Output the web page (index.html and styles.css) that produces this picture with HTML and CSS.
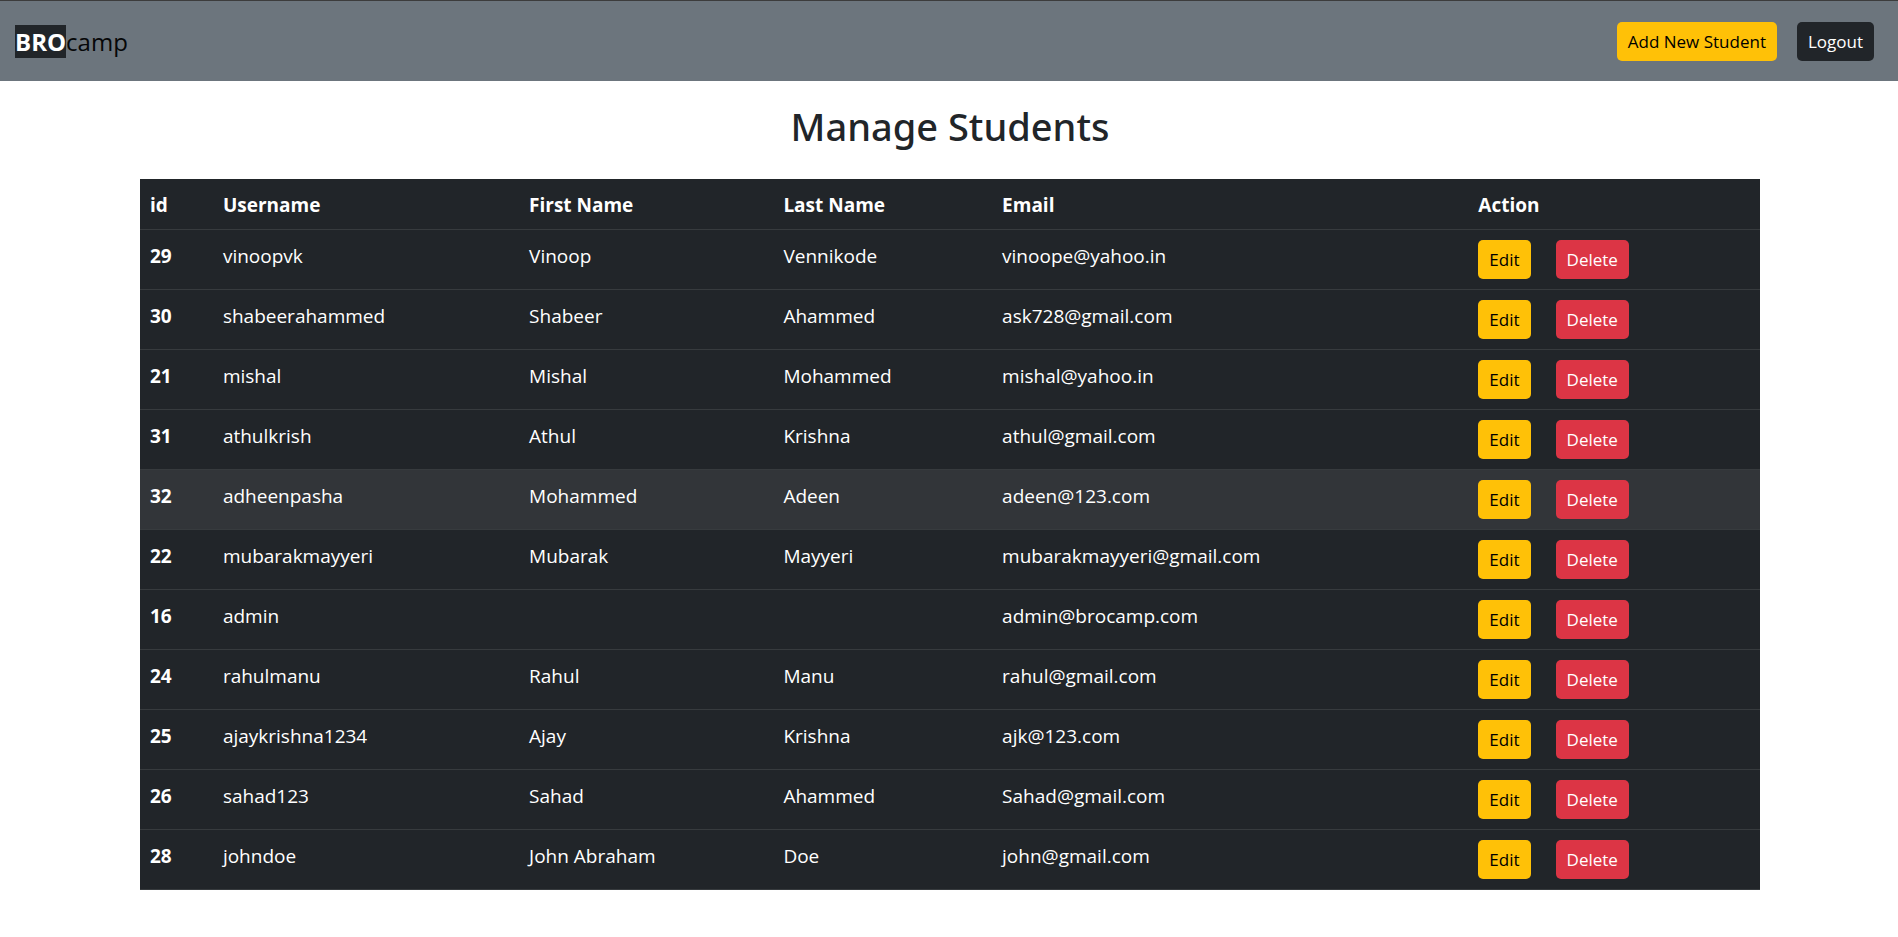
FILE: index.html
```html
<!DOCTYPE html>
<html lang="en">
<head>
<meta charset="utf-8">
<title>Manage Students</title>
<link rel="stylesheet" href="styles.css">
</head>
<body>
<nav class="navbar">
  <a class="brand" href="#"><span class="brand-mark">BRO</span>camp</a>
  <div class="nav-actions">
    <button class="btn btn-warning" type="button">Add New Student</button>
    <button class="btn btn-dark" type="button">Logout</button>
  </div>
</nav>
<main class="container">
  <h1 class="title">Manage Students</h1>
  <table class="table">
    <colgroup><col class="col-id"><col class="col-user"><col class="col-first"><col class="col-last"><col class="col-email"><col class="col-action"></colgroup>
    <thead>
      <tr><th scope="col">id</th><th scope="col">Username</th><th scope="col">First Name</th><th scope="col">Last Name</th><th scope="col">Email</th><th scope="col">Action</th></tr>
    </thead>
    <tbody>
      <tr><th scope="row">29</th><td>vinoopvk</td><td>Vinoop</td><td>Vennikode</td><td>vinoope@yahoo.in</td><td class="action-cell"><div class="actions"><button class="btn btn-warning" type="button">Edit</button><button class="btn btn-danger" type="button">Delete</button></div></td></tr>
      <tr><th scope="row">30</th><td>shabeerahammed</td><td>Shabeer</td><td>Ahammed</td><td>ask728@gmail.com</td><td class="action-cell"><div class="actions"><button class="btn btn-warning" type="button">Edit</button><button class="btn btn-danger" type="button">Delete</button></div></td></tr>
      <tr><th scope="row">21</th><td>mishal</td><td>Mishal</td><td>Mohammed</td><td>mishal@yahoo.in</td><td class="action-cell"><div class="actions"><button class="btn btn-warning" type="button">Edit</button><button class="btn btn-danger" type="button">Delete</button></div></td></tr>
      <tr><th scope="row">31</th><td>athulkrish</td><td>Athul</td><td>Krishna</td><td>athul@gmail.com</td><td class="action-cell"><div class="actions"><button class="btn btn-warning" type="button">Edit</button><button class="btn btn-danger" type="button">Delete</button></div></td></tr>
      <tr class="active"><th scope="row">32</th><td>adheenpasha</td><td>Mohammed</td><td>Adeen</td><td>adeen@123.com</td><td class="action-cell"><div class="actions"><button class="btn btn-warning" type="button">Edit</button><button class="btn btn-danger" type="button">Delete</button></div></td></tr>
      <tr><th scope="row">22</th><td>mubarakmayyeri</td><td>Mubarak</td><td>Mayyeri</td><td>mubarakmayyeri@gmail.com</td><td class="action-cell"><div class="actions"><button class="btn btn-warning" type="button">Edit</button><button class="btn btn-danger" type="button">Delete</button></div></td></tr>
      <tr><th scope="row">16</th><td>admin</td><td></td><td></td><td>admin@brocamp.com</td><td class="action-cell"><div class="actions"><button class="btn btn-warning" type="button">Edit</button><button class="btn btn-danger" type="button">Delete</button></div></td></tr>
      <tr><th scope="row">24</th><td>rahulmanu</td><td>Rahul</td><td>Manu</td><td>rahul@gmail.com</td><td class="action-cell"><div class="actions"><button class="btn btn-warning" type="button">Edit</button><button class="btn btn-danger" type="button">Delete</button></div></td></tr>
      <tr><th scope="row">25</th><td>ajaykrishna1234</td><td>Ajay</td><td>Krishna</td><td>ajk@123.com</td><td class="action-cell"><div class="actions"><button class="btn btn-warning" type="button">Edit</button><button class="btn btn-danger" type="button">Delete</button></div></td></tr>
      <tr><th scope="row">26</th><td>sahad123</td><td>Sahad</td><td>Ahammed</td><td>Sahad@gmail.com</td><td class="action-cell"><div class="actions"><button class="btn btn-warning" type="button">Edit</button><button class="btn btn-danger" type="button">Delete</button></div></td></tr>
      <tr><th scope="row">28</th><td>johndoe</td><td>John Abraham</td><td>Doe</td><td>john@gmail.com</td><td class="action-cell"><div class="actions"><button class="btn btn-warning" type="button">Edit</button><button class="btn btn-danger" type="button">Delete</button></div></td></tr>
    </tbody>
  </table>
</main>
</body>
</html>
```

FILE: styles.css
```css
* { box-sizing: border-box; }
body {
  margin: 0;
  background: #fff;
  color: #212529;
  font-family: "Segoe UI", "Open Sans", "Noto Sans", sans-serif;
  font-size: 19px;
  line-height: 30px;
}
.navbar {
  display: flex;
  align-items: center;
  justify-content: space-between;
  padding: 21px 24px 20px 15px;
  border-top: 1px solid #3c3c3c;
  background: #6c757d;
}
.brand {
  color: #060708;
  font-size: 24px;
  line-height: 33px;
  text-decoration: none;
}
.brand-mark {
  display: inline-block;
  background: #212529;
  color: #fff;
  font-weight: 700;
}
.nav-actions { display: flex; gap: 20px; }
.btn {
  height: 39px;
  padding: 0 11px;
  border: 0;
  border-radius: 5px;
  font-family: inherit;
  font-size: 17px;
  font-weight: 400;
  line-height: 39px;
  white-space: nowrap;
  cursor: pointer;
}
.btn-warning { background: #ffc107; color: #000; }
.btn-dark { background: #212529; color: #fff; }
.btn-danger { background: #dc3545; color: #fff; }
.container { padding: 21px 138px 40px 140px; }
.title {
  margin: 0 0 29px;
  font-family: "Segoe UI", "Noto Sans", "Open Sans", sans-serif;
  font-size: 38px;
  font-weight: 500;
  line-height: 48px;
  text-align: center;
}
.table {
  width: 100%;
  table-layout: fixed;
  border-spacing: 0;
  background: #212529;
  color: #fff;
}
.col-id { width: 4.5%; }
.col-user { width: 18.9%; }
.col-first { width: 15.7%; }
.col-last { width: 13.5%; }
.col-email { width: 29.4%; }
.col-action { width: 18%; }
.table th,
.table td {
  padding: 11px 10px 9px;
  border-bottom: 1px solid #373b3e;
  text-align: left;
  vertical-align: top;
}
.table .action-cell { padding: 10px; }
.table th { font-weight: 700; }
.active { background: #323539; }
.actions { display: flex; gap: 25px; }
```
